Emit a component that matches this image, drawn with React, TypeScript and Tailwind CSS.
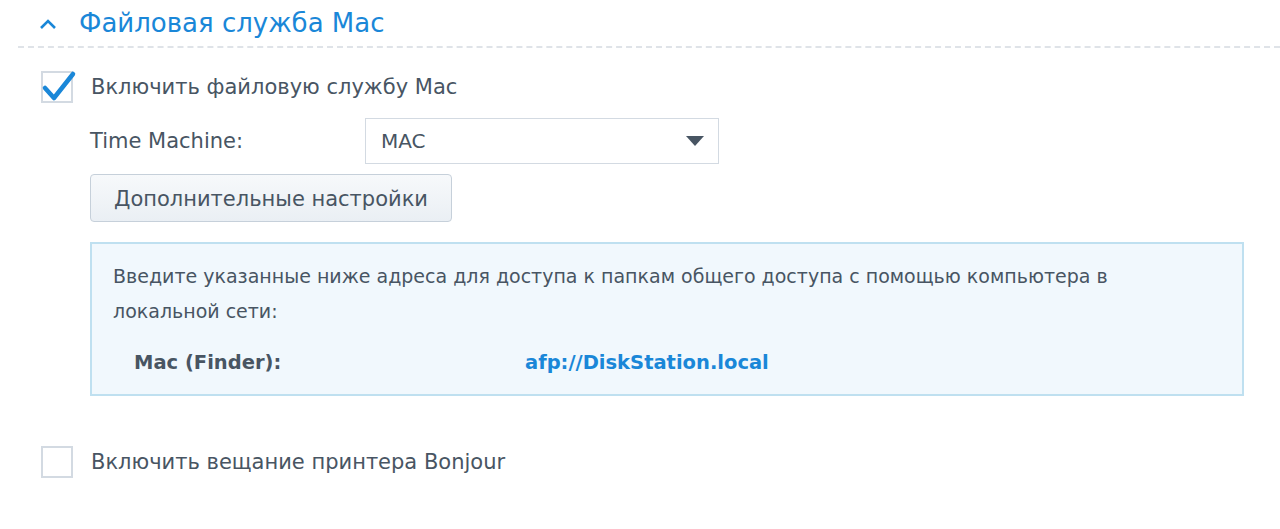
import React from "react";

export default function App() {
  const font = { fontFamily: '"DejaVu Sans", Verdana, sans-serif' };
  return (
    <div className="w-[1280px] h-[529px] bg-white overflow-hidden text-[#485563]" style={font}>
      <div className="pl-[18px]">
        <div className="flex items-center h-[46px] pl-[21px]">
          <svg width="18" height="12" viewBox="0 0 18 12" className="mr-[22px] mt-[2px]">
            <path d="M2 10 L9 3 L16 10" fill="none" stroke="#1a87d8" strokeWidth="2.6" />
          </svg>
          <span className="text-[26px] text-[#1a87d8] leading-none">Файловая служба Mac</span>
        </div>
        <div className="border-t-2 border-dashed border-[#dfe3e8]" />
      </div>

      <div className="pl-[41px] pt-[23px]">
        <div className="flex items-center h-[32px]">
          <div className="relative w-[32px] h-[32px] border-2 border-[#d3dae2] bg-white shrink-0">
            <svg width="36" height="36" viewBox="0 0 36 36" className="absolute left-[-2px] top-[-2px] overflow-visible">
              <path d="M4 17 L13 27 L32 3" fill="none" stroke="#1a87d8" strokeWidth="4.5" strokeLinecap="round" strokeLinejoin="round" />
            </svg>
          </div>
          <span className="ml-[18px] pt-[2px] text-[21px]">Включить файловую службу Mac</span>
        </div>

        <div className="pl-[49px]">
          <div className="flex items-center mt-[15px] h-[46px]">
            <span className="w-[275px] pt-[2px] text-[21px]">Time Machine:</span>
            <div className="w-[354px] h-[46px] border border-[#d3dae2] flex items-center justify-between pl-[15px] pr-[14px]">
              <span className="text-[20px]">MAC</span>
              <svg width="18" height="10" viewBox="0 0 18 10">
                <path d="M0 0 L18 0 L9 10 Z" fill="#485563" />
              </svg>
            </div>
          </div>

          <button className="mt-[10px] w-[362px] h-[48px] pt-[3px] rounded-[4px] border border-[#c6d0da] bg-gradient-to-b from-[#f7f9fb] to-[#eaeff4] text-[21px] text-[#485563]" style={font}>
            Дополнительные настройки
          </button>

          <div className="mt-[20px] mr-[36px] border-2 border-[#bfe0f0] bg-[#f1f8fd] pl-[21px] pt-[15px] pb-[19px] text-[19px]">
            <div className="leading-[35px]">
              Введите указанные ниже адреса для доступа к папкам общего доступа с помощью компьютера в
              <br />
              локальной сети:
            </div>
            <div className="flex mt-[22px] font-bold pl-[21px] text-[19.5px] leading-[24px]">
              <span className="w-[391px]">Mac (Finder):</span>
              <span className="text-[#1a87d8]">afp://DiskStation.local</span>
            </div>
          </div>
        </div>

        <div className="flex items-center h-[32px] mt-[50px]">
          <div className="w-[32px] h-[32px] border-2 border-[#d3dae2] bg-white shrink-0" />
          <span className="ml-[18px] pt-[2px] text-[21px]">Включить вещание принтера Bonjour</span>
        </div>
      </div>
    </div>
  );
}
